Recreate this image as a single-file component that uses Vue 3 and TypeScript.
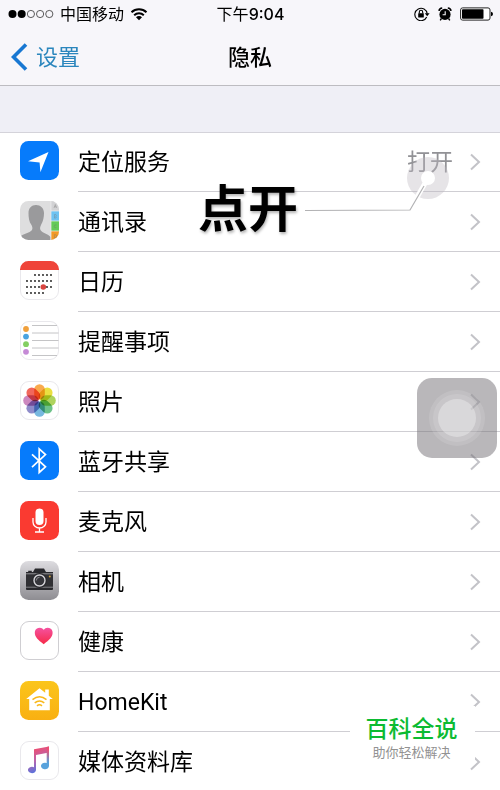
<script setup lang="ts">
type IconName =
  | 'location' | 'contacts' | 'calendar' | 'reminders' | 'photos' | 'bluetooth'
  | 'microphone' | 'camera' | 'health' | 'homekit' | 'media'

interface PrivacyItem {
  icon: IconName
  label: string
  value?: string
}

const items: PrivacyItem[] = [
  { icon: 'location', label: '定位服务', value: '打开' },
  { icon: 'contacts', label: '通讯录' },
  { icon: 'calendar', label: '日历' },
  { icon: 'reminders', label: '提醒事项' },
  { icon: 'photos', label: '照片' },
  { icon: 'bluetooth', label: '蓝牙共享' },
  { icon: 'microphone', label: '麦克风' },
  { icon: 'camera', label: '相机' },
  { icon: 'health', label: '健康' },
  { icon: 'homekit', label: 'HomeKit' },
  { icon: 'media', label: '媒体资料库' },
]

const petals: string[] = [
  '#f9a13a', '#e8dc2c', '#a5cf4c', '#5dbb7c', '#68b0dc', '#8380c4', '#c77bb8', '#f0564a',
]

const reminderColors: string[] = ['#f0a03c', '#4aa3e0', '#84cf62', '#c58ad6']

// Calendar dots: the first week starts on the third column.
const calendarDots: { x: number; y: number }[] = []
for (let row = 0; row < 4; row++) {
  for (let col = 0; col < 7; col++) {
    if (row === 0 && col < 2) continue
    if (row === 3 && col > 4) continue
    calendarDots.push({ x: 7 + col * 4, y: 14 + row * 6 })
  }
}
</script>

<template>
  <div class="screen">
    <header class="top">
      <div class="status">
        <div class="status-left">
          <svg class="signal" width="46" height="10" viewBox="0 0 46 10" aria-hidden="true">
            <circle cx="4.5" cy="5" r="4" />
            <circle cx="13.7" cy="5" r="4" />
            <circle v-for="n in 3" :key="n" class="hollow" :cx="13.7 + n * 9.2" cy="5" r="3.6" />
          </svg>
          <span>中国移动</span>
          <svg width="18" height="14" viewBox="0 0 18 14" aria-hidden="true">
            <path d="M1.5 5.2a10.8 10.8 0 0 1 15 0M4.2 8.2a7 7 0 0 1 9.6 0" fill="none" stroke="#000" stroke-width="2" />
            <path d="M9 13.2 6 10.3a4.2 4.2 0 0 1 6 0z" />
          </svg>
        </div>
        <time>下午<span class="digits">9:04</span></time>
        <div class="status-right">
          <svg width="16" height="14" viewBox="0 0 16 14" aria-hidden="true">
            <path d="M12.7 10A6.2 6.2 0 1 1 13.2 6.8" fill="none" stroke="#000" stroke-width="1.1" />
            <path d="M10.8 6.2h4.8l-2.4 3z" />
            <rect x="4.2" y="6.2" width="5.6" height="4.4" rx=".5" />
            <path d="M5.3 6.5V5a1.7 1.7 0 0 1 3.4 0v1.5" fill="none" stroke="#000" stroke-width="1.1" />
          </svg>
          <svg width="14" height="14" viewBox="0 0 14 14" aria-hidden="true">
            <circle cx="7" cy="7.4" r="5.6" />
            <path d="M1 3.8A3.5 3.5 0 0 1 4.2 1M13 3.8A3.5 3.5 0 0 0 9.8 1" fill="none" stroke="#000" stroke-width="1.7" />
            <path d="m3.4 11.5-1.2 1.8m8.4-1.8 1.2 1.8" stroke="#000" stroke-width="1.4" />
            <path d="M7.2 4.2v3.6H4.6" fill="none" stroke="#f7f6fa" stroke-width="1.1" />
          </svg>
          <svg width="33" height="14" viewBox="0 0 33 14" aria-hidden="true">
            <rect x=".6" y=".9" width="29.4" height="12.2" rx="2" fill="#fff" stroke="#222" stroke-width="1" />
            <rect x="2" y="2.2" width="21.5" height="9.6" rx=".8" />
            <path d="M31 4.7q2 .4 2 2.3t-2 2.3z" />
          </svg>
        </div>
      </div>
      <nav class="nav">
        <a class="back" href="#settings">
          <svg width="17" height="28" viewBox="0 0 17 28" aria-hidden="true">
            <path d="M15 1.5 2.500 14 15 26.500" fill="none" stroke="#1877d2" stroke-width="3.600" />
          </svg>
          <span>设置</span>
        </a>
        <h1>隐私</h1>
      </nav>
    </header>

    <main>
      <ul class="list">
        <li v-for="(item, index) in items" :key="item.icon" class="row">
          <a class="link" :href="'#' + item.icon">
            <svg class="icon" viewBox="0 0 39 39" aria-hidden="true">
              <defs>
                <linearGradient id="camera-bg" x2="0" y2="1">
                  <stop stop-color="#dddce0" /><stop offset="1" stop-color="#8e8d92" />
                </linearGradient>
                <linearGradient id="heart-fill" x2="0" y2="1">
                  <stop stop-color="#f552a0" /><stop offset="1" stop-color="#f62a48" />
                </linearGradient>
                <linearGradient id="home-bg" x2="0" y2="1">
                  <stop stop-color="#fbc51b" /><stop offset="1" stop-color="#f9b012" />
                </linearGradient>
                <linearGradient id="note-fill" x1=".3" x2=".6" y2="1">
                  <stop offset=".1" stop-color="#ec4f74" /><stop offset=".5" stop-color="#b865ae" /><stop offset=".9" stop-color="#5a72dc" />
                </linearGradient>
                <linearGradient id="note-right" x2="0" y2="1">
                  <stop offset=".15" stop-color="#ec4f74" /><stop offset=".7" stop-color="#58a2dc" />
                </linearGradient>
                <clipPath id="tile"><rect width="39" height="39" rx="8.5" /></clipPath>
              </defs>

              <g v-if="item.icon === 'location'">
                <rect width="39" height="39" rx="8.5" fill="#067bfb" />
                <path d="M28.500 11 8 20.200l11.600 1.200.8 9.900z" fill="#fff" />
              </g>

              <g v-else-if="item.icon === 'contacts'" clip-path="url(#tile)">
                <rect width="39" height="39" fill="#dededf" />
                <path d="M0 39v-3c2-3 10-4 12-7 .7-1.500.5-3-.5-5C9 21 8.500 16 8.500 12c0-5 3-8 7.500-8s8 3 8 8c0 4-.7 8-3 12-1 2-1.200 3.500-.5 5 1.500 3 8 4 10 7v3z" fill="#9a9a9c" />
                <path d="M31 0h8v10h-8z" fill="#d2d2d4" />
                <path d="M31 10h8v10h-8z" fill="#6fc3f2" />
                <path d="M31 20h8v10h-8z" fill="#63cb59" />
                <path d="M31 30h8v9h-8z" fill="#f29a26" />
                <path d="M31 0v39M31 10h8M31 20h8M31 30h8" stroke="#eee" stroke-width=".7" />
                <path d="m34 7 1.300-3.500L36.600 7M34.500 5.800h1.700M34.500 13.500h1.200q1.300.8 0 1.700 1.500.9 0 1.900h-1.200zM36.500 24q-2.300-.7-2.300 1.300t2.300 1.300M34.500 33.500v3.500q3-.2 2-2.600-.6-.9-2-.9" fill="none" stroke="#777" stroke-opacity=".6" stroke-width=".6" />
              </g>

              <g v-else-if="item.icon === 'calendar'">
                <rect class="outline" x=".5" y=".5" width="38" height="38" rx="8.500" />
                <path d="M0 9V8.500A8.500 8.500 0 0 1 8.500 0h22A8.500 8.500 0 0 1 39 8.500V9z" fill="#ef4439" />
                <circle v-for="(dot, n) in calendarDots" :key="n" :cx="dot.x" :cy="dot.y" r=".9" fill="#111" />
                <circle cx="23.300" cy="26" r="2.800" fill="#d94540" />
              </g>

              <g v-else-if="item.icon === 'reminders'">
                <rect class="outline" x=".5" y=".5" width="38" height="38" rx="8.500" />
                <circle v-for="(color, n) in reminderColors" :key="color" cx="6" :cy="8 + n * 7.6" r="2.900" :fill="color" />
                <path d="M12 4.500h25M12 12h26.500M12 19.500h26.500M12 27h26.500M12 34.500h25" stroke="#bdbdbf" stroke-width=".9" />
              </g>

              <g v-else-if="item.icon === 'photos'">
                <rect class="outline" x=".5" y=".5" width="38" height="38" rx="8.500" />
                <rect
                  v-for="(color, n) in petals"
                  :key="color"
                  class="petal"
                  x="14.200" y="3.200" width="10.600" height="15.300" rx="5.300"
                  :fill="color"
                  :transform="`rotate(${n * 45} 19.5 19.5)`"
                />
              </g>

              <g v-else-if="item.icon === 'bluetooth'">
                <rect width="39" height="39" rx="8.500" fill="#067bfb" />
                <path d="m12 13.300 13.500 12.500-6.300 5.700V7.800l6.300 5.700L12 26.200" fill="none" stroke="#fff" stroke-width="1.700" />
              </g>

              <g v-else-if="item.icon === 'microphone'">
                <rect width="39" height="39" rx="8.500" fill="#fa3a31" />
                <rect x="15.500" y="7.500" width="8" height="16.500" rx="4" fill="#fff" />
                <path d="M13 17v4a6.500 6 0 0 0 13 0v-4M19.500 27v4M15 31h9" fill="none" stroke="#fff" stroke-width="1.300" />
              </g>

              <g v-else-if="item.icon === 'camera'">
                <rect width="39" height="39" rx="8.500" fill="url(#camera-bg)" />
                <path d="M6 12.500V11h2.200V9.800h3.600V11H13l2-3.500h9l2 3.500h7v1.500z" fill="#29292d" />
                <rect x="6" y="13.200" width="27" height="12.600" fill="#303034" />
                <path d="M6 26.500h27V28a1 1 0 0 1-1 1H7a1 1 0 0 1-1-1z" fill="#29292d" />
                <circle cx="19.500" cy="19.500" r="7.500" fill="#29292d" />
                <circle cx="19.500" cy="19.500" r="5.500" fill="#35353a" stroke="#d5d4d8" stroke-width="1.400" />
                <path d="M16.300 19.500a3.200 3.200 0 0 1 3.200-3.200" fill="none" stroke="#8d8c91" />
                <circle cx="29.800" cy="15.500" r="1" fill="#d0a23e" />
              </g>

              <g v-else-if="item.icon === 'health'">
                <rect x=".5" y=".5" width="38" height="38" rx="8.500" fill="#fff" stroke="#cfced2" />
                <path d="M23.700 23.200C18 19 14.800 15.900 14.800 11.800a4.900 4.900 0 0 1 8.900-3 4.900 4.900 0 0 1 8.900 3c0 4.100-3.200 7.200-8.900 11.400z" fill="url(#heart-fill)" />
              </g>

              <g v-else-if="item.icon === 'homekit'">
                <rect width="39" height="39" rx="8.500" fill="url(#home-bg)" />
                <path d="M19.500 7.200 6.200 18h3v11.300h20.600V18h3l-4-3.300V8.500h-3.600v3.200z" fill="#fff" />
                <path d="M12.500 18.600q7-5.500 14 0M14.700 21.800q4.800-3.800 9.600 0M17 24.800q2.500-2 5 0" fill="none" stroke="#f9b81a" stroke-width="1.500" />
              </g>

              <g v-else>
                <rect class="outline" x=".5" y=".5" width="38" height="38" rx="8.500" />
                <path d="M14 8.200 29 5.500v6L16 14v15a4 3.200 0 1 1-2-2.800z" fill="url(#note-fill)" />
                <path d="M26.700 6 29 5.500V25a4 3.200 0 1 1-2.300-2.900z" fill="url(#note-right)" />
              </g>
            </svg>
            <span class="body">
              <span class="label">{{ item.label }}</span>
              <span v-if="item.value" class="value">{{ item.value }}</span>
              <svg class="chevron" width="12" height="18" viewBox="0 0 12 18" aria-hidden="true">
                <path d="m2 1.500 8 7.500-8 7.500" fill="none" stroke="#c3c3c8" stroke-width="2" />
              </svg>
            </span>
          </a>
          <div v-if="index === 0" class="callout">
            <strong>点开</strong>
            <svg width="150" height="60" viewBox="0 0 150 60" aria-hidden="true">
              <circle cx="126" cy="22" r="21" fill="#bcb9c0" fill-opacity=".38" />
              <path d="M126 22 114 43" stroke="#fff" stroke-width="5" />
              <circle cx="126" cy="22" r="7" fill="#fff" />
              <path d="M3 54.500 108 54 122 30" fill="none" stroke="#b2b2b4" stroke-width="1.200" />
            </svg>
          </div>
        </li>
      </ul>
    </main>

    <button class="assistive" type="button" aria-label="AssistiveTouch">
      <span class="ring"><span class="ring inner"><span class="core"></span></span></span>
    </button>

    <aside class="watermark">
      <strong>百科全说</strong>
      <small>助你轻松解决</small>
    </aside>
  </div>
</template>

<style>
body {
  margin: 0;
  background: #fff;
}
</style>

<style scoped>
.screen {
  position: relative;
  height: 100vh;
  overflow: hidden;
  background: #fff;
  color: #000;
  font-family: Inter, "Noto Sans CJK SC", sans-serif;
}

.top {
  background: #f7f6fa;
  border-bottom: 1px solid #bdbcc1;
}

.status {
  display: grid;
  grid-template-columns: 1fr auto 1fr;
  align-items: center;
  height: 28px;
  padding: 0 7px 0 8px;
  font-size: 16px;
  line-height: 28px;
}

.status-left,
.status-right {
  display: flex;
  align-items: center;
}

.status-left {
  gap: 6px;
}

.status-right {
  justify-content: flex-end;
  gap: 8px;
}

.signal .hollow {
  fill: none;
  stroke: #333;
  stroke-width: 0.8;
}

.digits {
  font-weight: 500;
}

.nav {
  display: grid;
  grid-template-columns: 1fr auto 1fr;
  align-items: center;
  box-sizing: border-box;
  height: 57px;
  padding: 0 11px;
}

.back {
  display: flex;
  align-items: center;
  gap: 8px;
  color: #2b86bd;
  font-size: 22px;
  line-height: 32px;
  text-decoration: none;
}

h1 {
  margin: 0;
  font-size: 22px;
  font-weight: 500;
  line-height: 32px;
}

main {
  padding-top: 46px;
  background: #efeff6;
}

.list {
  margin: 0;
  padding: 0;
  background: #fff;
  box-shadow: inset 0 1px #d4d3da;
  list-style: none;
}

.row {
  position: relative;
}

.link {
  display: flex;
  align-items: center;
  gap: 19px;
  padding-left: 20px;
  color: #000;
  text-decoration: none;
}

.icon {
  flex: none;
  width: 39px;
  height: 39px;
  margin-bottom: 3px;
}

.icon .outline {
  fill: #fff;
  stroke: #e9e8ec;
}

.petal {
  mix-blend-mode: multiply;
  opacity: 0.9;
}

.body {
  display: flex;
  flex: 1;
  align-items: center;
  box-sizing: border-box;
  height: 60px;
  padding: 1px 19px 0 0;
  border-bottom: 1px solid #cfced3;
  font-family: Roboto, "Noto Sans CJK SC", sans-serif;
  font-size: 23px;
  line-height: 32px;
}

.label,
.value {
  padding-top: 2px;
}

.label {
  flex: 1;
}

.value {
  margin-right: 16px;
  color: #929296;
}

.callout {
  position: absolute;
  z-index: 1;
  top: 24px;
  left: 198px;
  display: flex;
  gap: 4px;
  pointer-events: none;
}

.callout strong {
  padding-top: 17px;
  font-size: 50px;
  line-height: 72px;
  text-shadow: 1px 2px 3px rgb(0 0 0 / 30%);
}

.assistive {
  position: absolute;
  top: 378px;
  right: 3px;
  display: grid;
  place-items: center;
  width: 80px;
  height: 80px;
  padding: 0;
  border: 0;
  border-radius: 15px;
  background: rgb(115 111 117 / 50%);
}

.ring {
  display: grid;
  place-items: center;
  width: 56px;
  height: 56px;
  border-radius: 50%;
  background: rgb(255 255 255 / 12%);
}

.inner {
  width: 48px;
  height: 48px;
}

.core {
  width: 38px;
  height: 38px;
  border-radius: 50%;
  background: rgb(255 255 255 / 32%);
}

.watermark {
  position: absolute;
  right: 25px;
  bottom: 27px;
  display: flex;
  flex-direction: column;
  align-items: center;
  box-sizing: border-box;
  width: 125px;
  height: 57px;
  padding: 8px 2px 0 0;
  background: #fff;
}

.watermark strong {
  color: #0cbb32;
  font-size: 23px;
  font-weight: 500;
  line-height: 30px;
}

.watermark small {
  color: #929292;
  font-size: 13px;
  line-height: 16px;
}
</style>
